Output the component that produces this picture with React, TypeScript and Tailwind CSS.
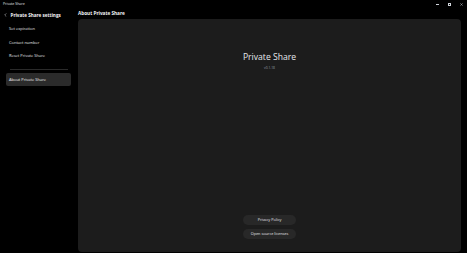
import React from 'react';

const items = ['Set expiration', 'Contact number', 'Reset Private Share'];

const App: React.FC = () => {
  return (
    <div
      className="w-[467px] h-[253px] bg-black text-white flex flex-col overflow-hidden"
      style={{ fontFamily: '"Open Sans", "Noto Sans", sans-serif' }}
    >
      {/* Title bar */}
      <div className="h-[8px] flex items-center justify-between pl-[3px] pr-[3px]">
        <span className="text-[3.5px] leading-none text-gray-200">Private Share</span>
        <div className="flex items-center gap-[9px] pr-[1px]">
          <div className="w-[3px] h-[0.6px] bg-gray-300" />
          <div className="w-[3px] h-[3px] border-[0.6px] border-gray-300" />
          <svg width="3" height="3" viewBox="0 0 10 10" className="text-gray-300">
            <path d="M1 1 L9 9 M9 1 L1 9" stroke="currentColor" strokeWidth="1.6" />
          </svg>
        </div>
      </div>

      <div className="flex flex-1 min-h-0">
        {/* Sidebar */}
        <div className="w-[78px] flex flex-col">
          <div className="h-[14px] flex items-center pl-[4px] gap-[3.5px]">
            <svg width="3" height="4" viewBox="0 0 6 10" className="text-gray-200">
              <path d="M5 1 L1 5 L5 9" stroke="currentColor" strokeWidth="1.2" fill="none" />
            </svg>
            <span className="text-[4.6px] leading-none font-bold text-gray-100">Private Share settings</span>
          </div>
          {items.map((label, i) => (
            <div
              key={label}
              className={`${i === 1 ? 'h-[13px]' : 'h-[14px]'} flex items-center pl-[9px] text-[4px] leading-none text-gray-200`}
            >
              {label}
            </div>
          ))}
          <div className="mt-[6px] mx-[10px] h-[1px] bg-[#2a2a2a]" />
          <div className="mt-[3px] mx-[6px] w-[65px] h-[13px] rounded-[2px] bg-[#2b2b2b] flex items-center pl-[3px] text-[4px] leading-none text-gray-100">
            About Private Share
          </div>
        </div>

        {/* Main */}
        <div className="flex-1 flex flex-col pr-[6px] pb-[1px]">
          <div className="h-[11px] flex items-center text-[4.7px] leading-none font-bold text-gray-100">
            About Private Share
          </div>
          <div className="flex-1 bg-[#1c1c1c] rounded-[4px] flex flex-col items-center pt-[33px] pb-[13px]">
            <div className="text-[8.6px] leading-[11px] text-gray-200">Private Share</div>
            <div className="mt-[3px] text-[3.3px] leading-none text-gray-400">v0.1.18</div>
            <div className="flex-1" />
            <div className="flex flex-col gap-[4px]">
              <div className="w-[53px] h-[10px] rounded-[5px] bg-[#282828] flex items-center justify-center text-[3.8px] leading-none text-gray-200">
                Privacy Policy
              </div>
              <div className="w-[53px] h-[10px] rounded-[5px] bg-[#282828] flex items-center justify-center text-[3.8px] leading-none text-gray-200">
                Open source licenses
              </div>
            </div>
          </div>
        </div>
      </div>
    </div>
  );
};

export default App;
